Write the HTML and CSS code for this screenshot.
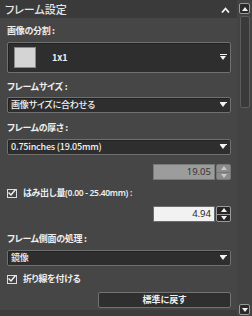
FILE: index.html
```html
<!DOCTYPE html>
<html lang="ja">
<head>
<meta charset="utf-8">
<link rel="stylesheet" href="styles.css">
</head>
<body>
<div class="app">
  <div class="panel">
    <div class="header">
      <span class="title">フレーム設定</span>
      <svg class="chev" width="9" height="6" viewBox="0 0 9 6"><path d="M1 5.5 L4.5 1.5 L8 5.5" fill="none" stroke="#f2f2f2" stroke-width="1.8"/></svg>
    </div>
    <div class="content">
      <div class="label l1">画像の分割 :</div>
      <div class="select big">
        <span class="thumb"></span>
        <span class="big-text">1x1</span>
        <span class="arrow"></span>
      </div>
      <div class="label l2">フレームサイズ :</div>
      <div class="select"><span class="sel-text">画像サイズに合わせる</span><span class="arrow"></span></div>
      <div class="label l3">フレームの厚さ :</div>
      <div class="select"><span class="sel-text">0.75inches (19.05mm)</span><span class="arrow"></span></div>
      <div class="spin-row s1">
        <div class="spin-input disabled">19.05</div>
        <div class="spin-btns disabled"><span class="up"></span><span class="down"></span></div>
      </div>
      <div class="check-row c1"><span class="box"><svg width="10" height="9" viewBox="0 0 10 9"><path d="M1.5 4.5 L4 7 L8.5 1.5" fill="none" stroke="#f0f0f0" stroke-width="1.5"/></svg></span><span class="check-text">はみ出し量<span class="latin">(0.00 - 25.40mm) :</span></span></div>
      <div class="spin-row s2">
        <div class="spin-input">4.94</div>
        <div class="spin-btns"><span class="up"></span><span class="down"></span></div>
      </div>
      <div class="label l4">フレーム側面の処理 :</div>
      <div class="select"><span class="sel-text">鏡像</span><span class="arrow"></span></div>
      <div class="check-row c2"><span class="box"><svg width="10" height="9" viewBox="0 0 10 9"><path d="M1.5 4.5 L4 7 L8.5 1.5" fill="none" stroke="#f0f0f0" stroke-width="1.5"/></svg></span><span class="check-text">折り線を付ける</span></div>
      <div class="btn-row"><div class="btn">標準に戻す</div></div>
    </div>
  </div>
  <div class="scrollbar">
    <div class="sb-btn"><span class="tri-up"></span></div>
    <div class="sb-thumb"></div>
    <div class="sb-space"></div>
    <div class="sb-btn"><span class="tri-down"></span></div>
  </div>
</div>
</body>
</html>
```

FILE: styles.css
```css
html, body {
  margin: 0;
  padding: 0;
  background: #3c3c3c;
}
body {
  width: 252px;
  height: 316px;
  overflow: hidden;
  font-family: "Noto Sans CJK JP", "Noto Sans", sans-serif;
  font-feature-settings: "palt";
  color: #ececec;
}
.app {
  display: flex;
  width: 252px;
  height: 316px;
}
.panel {
  width: 237px;
  height: 310px;
  background: #464646;
  display: flex;
  flex-direction: column;
}
.header {
  height: 18px;
  background: #3a3a3a;
  display: flex;
  align-items: center;
  justify-content: space-between;
  padding: 0 7px 0 5px;
  box-sizing: border-box;
}
.title {
  font-size: 11px;
  line-height: 18px;
  font-weight: 500;
  color: #e6e6e6;
}
.chev { margin-top: 1px; }
.content {
  display: flex;
  flex-direction: column;
  padding: 7px 6px 0 7px;
}
.label {
  height: 12px;
  line-height: 12px;
  font-size: 9px;
  font-weight: 700;
  letter-spacing: -0.3px;
  color: #eeeeee;
}
.l1 { margin-bottom: 5px; }
.l2 { margin-top: 8px; margin-bottom: 4px; }
.l3 { margin-top: 9px; margin-bottom: 5px; }
.l4 { margin-top: 11px; margin-bottom: 5px; }
.select {
  height: 16px;
  box-sizing: border-box;
  border: 1px solid #707070;
  border-radius: 2px;
  background: #2e2e2e;
  display: flex;
  align-items: center;
  padding: 0 4px 0 3px;
  box-shadow: inset 1px 1px 0 #222;
}
.sel-text {
  flex: 1;
  font-size: 9px;
  line-height: 14px;
  font-weight: 500;
  letter-spacing: -0.2px;
  color: #f2f2f2;
}
.arrow {
  width: 0;
  height: 0;
  border-left: 3.5px solid transparent;
  border-right: 3.5px solid transparent;
  border-top: 4px solid #f4f4f4;
  position: relative;
}
.arrow::before {
  content: "";
  position: absolute;
  left: -3.5px;
  top: -5.5px;
  width: 7px;
  height: 1px;
  background: #f4f4f4;
}
.big {
  height: 31px;
  padding: 0 4px 0 6px;
}
.thumb {
  width: 20px;
  height: 19px;
  background: #d4d4d4;
  border: 1px solid #8a8a8a;
}
.big-text {
  flex: 1;
  margin-left: 16px;
  font-size: 9px;
  font-weight: 700;
  color: #f2f2f2;
}
.spin-row {
  display: flex;
  justify-content: flex-end;
  gap: 1px;
  height: 16px;
}
.s1 { margin-top: 9px; }
.s2 { margin-top: 7px; }
.spin-input {
  width: 62px;
  height: 16px;
  box-sizing: border-box;
  background: #f2f2f2;
  border: 1px solid #6c6c6c;
  font-family: "Noto Sans", sans-serif;
  font-size: 9.5px;
  line-height: 14px;
  text-align: right;
  padding-right: 3px;
  color: #1e1e1e;
}
.spin-input.disabled {
  background: #9c9c9c;
  color: #333;
  border-color: #7a7a7a;
}
.spin-btns {
  width: 15px;
  height: 16px;
  display: flex;
  flex-direction: column;
  box-sizing: border-box;
  border: 1px solid #9a9a9a;
  border-radius: 2px;
  background: #262626;
}
.spin-btns.disabled {
  background: #8c8c8c;
  border-color: #777;
}
.spin-btns span {
  flex: 1;
  display: flex;
  align-items: center;
  justify-content: center;
}
.spin-btns .up { border-bottom: 1px solid #9a9a9a; }
.spin-btns.disabled .up { border-bottom-color: #777; }
.spin-btns .up::after {
  content: "";
  border-left: 3.5px solid transparent;
  border-right: 3.5px solid transparent;
  border-bottom: 4px solid #f4f4f4;
}
.spin-btns .down::after {
  content: "";
  border-left: 3.5px solid transparent;
  border-right: 3.5px solid transparent;
  border-top: 4px solid #f4f4f4;
}
.spin-btns.disabled .up::after { border-bottom-color: #c8c8c8; }
.spin-btns.disabled .down::after { border-top-color: #c8c8c8; }
.check-row {
  display: flex;
  align-items: center;
  height: 12px;
}
.c1 { margin-top: 7px; }
.c2 { margin-top: 7px; }
.box {
  width: 10px;
  height: 9px;
  box-sizing: border-box;
  border: 1px solid #dcdcdc;
  margin-right: 6px;
  position: relative;
  display: flex;
}
.box svg {
  position: absolute;
  left: -1px;
  top: -2px;
}
.check-text {
  font-size: 9px;
  line-height: 12px;
  font-weight: 700;
  letter-spacing: -0.3px;
  color: #eeeeee;
}
.latin {
  font-family: "Noto Sans", sans-serif;
  font-size: 8.5px;
  font-weight: 600;
  letter-spacing: -0.3px;
}
.btn-row {
  display: flex;
  justify-content: flex-end;
  margin-top: 7px;
}
.btn {
  width: 133px;
  height: 16px;
  box-sizing: border-box;
  border: 1px solid #727272;
  border-radius: 2px;
  background: #2f2f2f;
  font-size: 9px;
  line-height: 14px;
  font-weight: 700;
  text-align: center;
  color: #f0f0f0;
}
.scrollbar {
  width: 15px;
  height: 316px;
  background: #434343;
  display: flex;
  flex-direction: column;
  align-items: center;
  padding: 3px 0 1px;
  box-sizing: border-box;
}
.sb-btn {
  width: 11px;
  height: 11px;
  box-sizing: border-box;
  border: 1px solid #9a9a9a;
  border-radius: 2px;
  background: #2a2a2a;
  display: flex;
  align-items: center;
  justify-content: center;
}
.tri-up {
  border-left: 3.5px solid transparent;
  border-right: 3.5px solid transparent;
  border-bottom: 4px solid #f4f4f4;
}
.tri-down {
  border-left: 3.5px solid transparent;
  border-right: 3.5px solid transparent;
  border-top: 4px solid #f4f4f4;
}
.sb-thumb {
  margin-top: 2px;
  width: 10px;
  height: 92px;
  box-sizing: border-box;
  border: 1px solid #5c5c5c;
  border-radius: 2px;
  background: #3a3a3a;
}
.sb-space { flex: 1; }
```
